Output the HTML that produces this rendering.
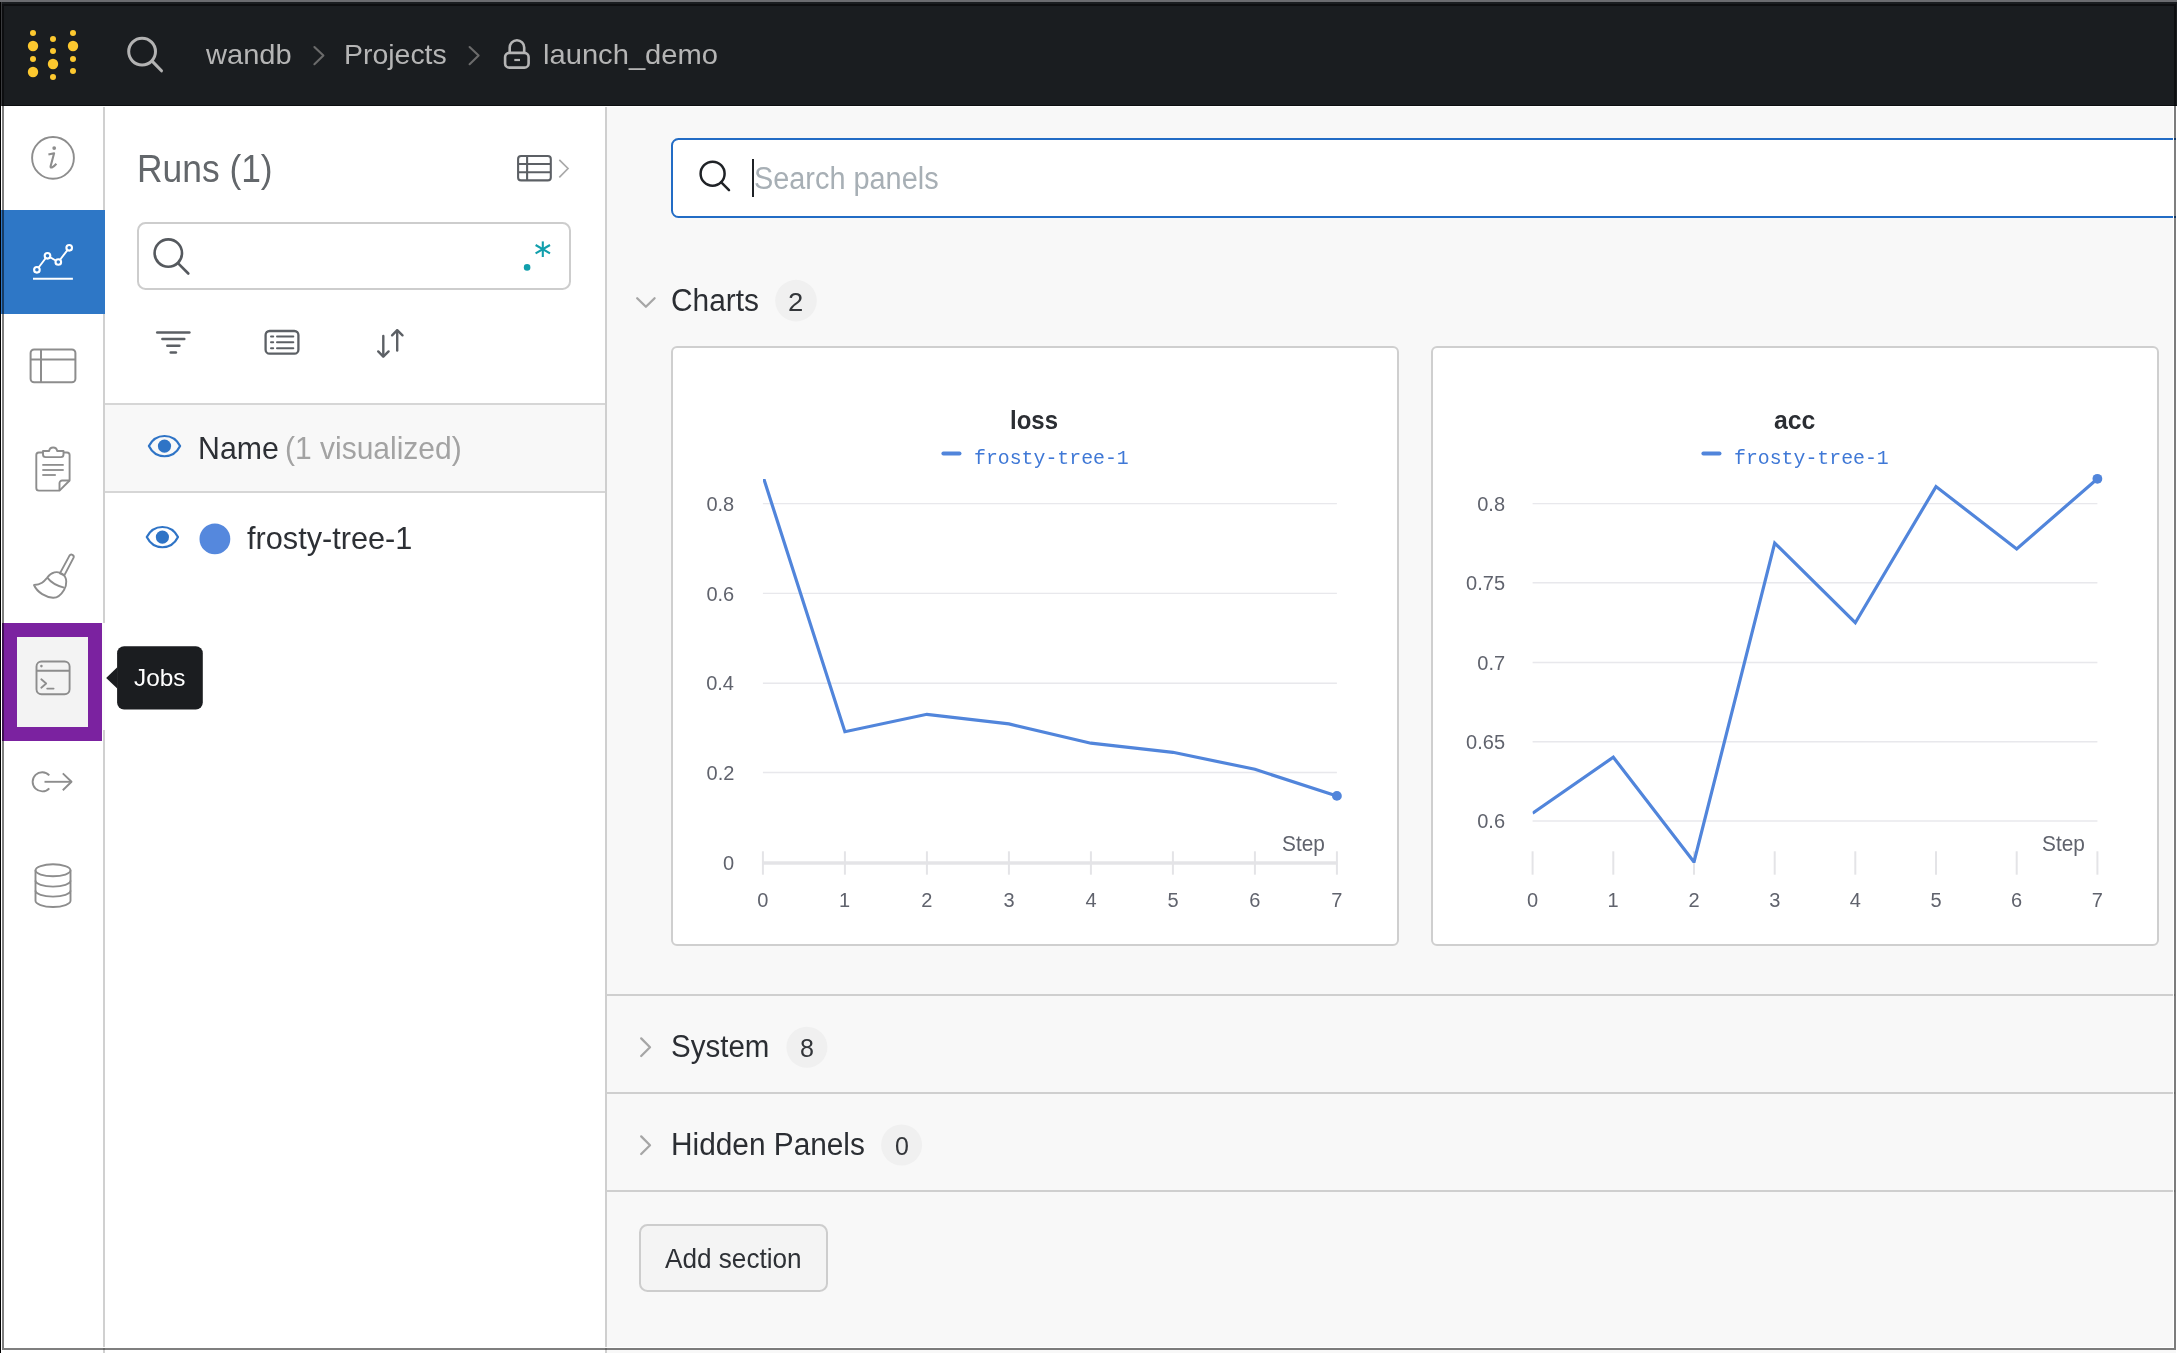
<!DOCTYPE html><html><head><meta charset="utf-8"><style>html,body{margin:0;padding:0;width:2177px;height:1353px;overflow:hidden;position:relative;font-family:"Liberation Sans",sans-serif}#root{position:absolute;left:0;top:0;width:2177px;height:1353px;will-change:transform}</style></head><body><div id="root"><div style="position:absolute;left:0px;top:0px;width:2177px;height:1353px;background:#f8f8f8"></div>
<div style="position:absolute;left:104px;top:106px;width:501px;height:1247px;background:#fff"></div>
<div style="position:absolute;left:1px;top:106px;width:102px;height:1247px;background:#fff"></div>
<div style="position:absolute;left:103px;top:106px;width:2px;height:1247px;background:#d0d0d0"></div>
<div style="position:absolute;left:605px;top:106px;width:1.5px;height:1247px;background:#cfcfcf"></div>
<div style="position:absolute;left:1px;top:2px;width:2176px;height:104px;background:#1a1d20"></div>
<div style="position:absolute;left:1px;top:105px;width:2176px;height:1px;background:#0c0e10"></div>
<div style="position:absolute;left:1px;top:106px;width:2176px;height:1px;background:#ffffff"></div>
<svg style="position:absolute;left:20px;top:20px;" width="70" height="70" viewBox="20 20 70 70"><circle cx="33" cy="33" r="3.0" fill="#fcc82f"/><circle cx="33" cy="46" r="5.2" fill="#fcc82f"/><circle cx="33" cy="59" r="3.0" fill="#fcc82f"/><circle cx="33" cy="72" r="5.2" fill="#fcc82f"/><circle cx="53" cy="39" r="3.0" fill="#fcc82f"/><circle cx="53" cy="51" r="3.0" fill="#fcc82f"/><circle cx="53" cy="64" r="5.2" fill="#fcc82f"/><circle cx="53" cy="77" r="3.0" fill="#fcc82f"/><circle cx="73" cy="33" r="3.0" fill="#fcc82f"/><circle cx="73" cy="46" r="5.2" fill="#fcc82f"/><circle cx="73" cy="59" r="3.0" fill="#fcc82f"/><circle cx="73" cy="71" r="3.0" fill="#fcc82f"/></svg>
<svg style="position:absolute;left:120px;top:30px;" width="50" height="50" viewBox="120 30 50 50"><circle cx="142.1" cy="51.6" r="13.4" fill="none" stroke="#b3b3b3" stroke-width="3"/><line x1="152.6" y1="61.6" x2="161.5" y2="70.8" stroke="#b3b3b3" stroke-width="3" stroke-linecap="round"/></svg>
<div style="position:absolute;left:206.30px;top:26.00px;font-family:'Liberation Sans', sans-serif;font-size:28.5px;line-height:56px;font-weight:400;color:#b5b5b5;white-space:pre;transform:scaleX(1.0199);transform-origin:0 0;">wandb</div>
<svg style="position:absolute;left:305px;top:40px;" width="25" height="30" viewBox="305 40 25 30"><polyline points="314.4,47 323.4,55.6 314.4,64.2" fill="none" stroke="#6b6b6b" stroke-width="2.1" stroke-linecap="round" stroke-linejoin="round"/></svg>
<div style="position:absolute;left:343.93px;top:26.00px;font-family:'Liberation Sans', sans-serif;font-size:28.5px;line-height:56px;font-weight:400;color:#b5b5b5;white-space:pre;transform:scaleX(0.9977);transform-origin:0 0;">Projects</div>
<svg style="position:absolute;left:460px;top:40px;" width="25" height="30" viewBox="460 40 25 30"><polyline points="469.6,47 478.6,55.6 469.6,64.2" fill="none" stroke="#6b6b6b" stroke-width="2.1" stroke-linecap="round" stroke-linejoin="round"/></svg>
<svg style="position:absolute;left:495px;top:30px;" width="45" height="45" viewBox="495 30 45 45"><rect x="505.1" y="52.9" width="23.5" height="14.7" rx="4.2" fill="none" stroke="#b5b5b5" stroke-width="2.6"/><path d="M509.7,52.9 V47.5 A7.2,7.2 0 0 1 524.2,47.5 V52.9" fill="none" stroke="#b5b5b5" stroke-width="2.6"/><line x1="514.3" y1="60" x2="520" y2="60" stroke="#b5b5b5" stroke-width="2.2"/></svg>
<div style="position:absolute;left:543.28px;top:26.00px;font-family:'Liberation Sans', sans-serif;font-size:28.5px;line-height:56px;font-weight:400;color:#b5b5b5;white-space:pre;transform:scaleX(1.0226);transform-origin:0 0;">launch_demo</div>
<svg style="position:absolute;left:25px;top:130px;" width="56" height="56" viewBox="25 130 56 56"><circle cx="53" cy="157.9" r="20.9" fill="none" stroke="#8d8d8d" stroke-width="1.9"/><circle cx="54.2" cy="148.1" r="1.9" fill="#8d8d8d"/><path d="M48.4,154.6 L54.1,153.3 L50.6,166.3 C50.2,168.3 52.6,168.2 56.4,163.8" fill="none" stroke="#8d8d8d" stroke-width="2.1" stroke-linejoin="round"/></svg>
<div style="position:absolute;left:1px;top:210px;width:103.8px;height:104px;background:#2e77c6"></div>
<svg style="position:absolute;left:25px;top:235px;" width="56" height="56" viewBox="25 235 56 56"><polyline points="36.9,269.8 47.5,255.8 58.3,262 69.2,247.8" fill="none" stroke="#fff" stroke-width="1.9"/><circle cx="36.9" cy="269.8" r="2.8" fill="#2e77c6" stroke="#fff" stroke-width="2.1"/><circle cx="47.5" cy="255.8" r="2.8" fill="#2e77c6" stroke="#fff" stroke-width="2.1"/><circle cx="58.3" cy="262" r="2.8" fill="#2e77c6" stroke="#fff" stroke-width="2.1"/><circle cx="69.2" cy="247.8" r="2.8" fill="#2e77c6" stroke="#fff" stroke-width="2.1"/><line x1="33" y1="278.8" x2="72.9" y2="278.8" stroke="#fff" stroke-width="2"/></svg>
<svg style="position:absolute;left:25px;top:340px;" width="56" height="50" viewBox="25 340 56 50"><rect x="30.6" y="349.4" width="44.8" height="32.9" rx="3.5" fill="none" stroke="#8d8d8d" stroke-width="2"/><line x1="30.6" y1="359.6" x2="75.4" y2="359.6" stroke="#8d8d8d" stroke-width="2"/><line x1="41" y1="349.4" x2="41" y2="382.3" stroke="#8d8d8d" stroke-width="2"/></svg>
<svg style="position:absolute;left:30px;top:440px;" width="46" height="56" viewBox="30 440 46 56"><path d="M43,452.5 H38.8 A2.6,2.6 0 0 0 36.3,455.1 V488 A2.6,2.6 0 0 0 38.9,490.6 H59.5 L69.6,480.5 V455.1 A2.6,2.6 0 0 0 67,452.5 H63.5" fill="none" stroke="#8d8d8d" stroke-width="1.9" stroke-linejoin="round"/><path d="M43,451 V454.5 A2.6,2.6 0 0 0 45.6,457.1 H60.9 A2.6,2.6 0 0 0 63.5,454.5 V451 H57.2 A4.1,4.1 0 0 0 49.1,451 Z" fill="none" stroke="#8d8d8d" stroke-width="1.9" stroke-linejoin="round"/><path d="M59.5,490.6 V483.2 A2.6,2.6 0 0 1 62.1,480.5 H69.6" fill="none" stroke="#8d8d8d" stroke-width="1.9"/><line x1="42.3" y1="464.9" x2="63.7" y2="464.9" stroke="#8d8d8d" stroke-width="1.8"/><line x1="42.3" y1="470" x2="63.7" y2="470" stroke="#8d8d8d" stroke-width="1.8"/><line x1="42.3" y1="475" x2="55.8" y2="475" stroke="#8d8d8d" stroke-width="1.8"/></svg>
<svg style="position:absolute;left:25px;top:545px;" width="60" height="60" viewBox="25 545 60 60"><path d="M69.5,555.6 A2.3,2.3 0 0 1 73.6,557.6 L64.3,575.4 L59.9,573.4 Z" fill="none" stroke="#8d8d8d" stroke-width="1.9" stroke-linejoin="round"/><path d="M34,585 C41,585 44,581.5 47.3,577.6 C51,572 57.5,570.5 62.5,574 C67.5,577.5 67,585 64,590 C61,595 57,598 53,597.8 C46,597 37.5,593 34,585 Z" fill="none" stroke="#8d8d8d" stroke-width="1.9" stroke-linejoin="round"/><path d="M47.3,577.6 C51,582.5 57,585.8 64,587.6" fill="none" stroke="#8d8d8d" stroke-width="1.9"/></svg>
<div style="position:absolute;left:2px;top:622.5px;width:100.3px;height:118.7px;background:#7b22a0"></div>
<div style="position:absolute;left:17.2px;top:637.1px;width:70.6px;height:89.6px;background:#f3f3f3"></div>
<div style="position:absolute;left:102.3px;top:622.5px;width:3px;height:107.6px;background:#fbfbfb"></div>
<svg style="position:absolute;left:30px;top:655px;" width="46" height="46" viewBox="30 655 46 46"><rect x="36.5" y="661.5" width="33.1" height="32.8" rx="5" fill="none" stroke="#8d8d8d" stroke-width="1.9"/><line x1="36.5" y1="670.8" x2="69.6" y2="670.8" stroke="#8d8d8d" stroke-width="1.9"/><circle cx="41.4" cy="666.1" r="1.3" fill="#8d8d8d"/><polyline points="41.3,679.3 46.2,683.5 41.3,687.7" fill="none" stroke="#8d8d8d" stroke-width="1.8" stroke-linecap="round" stroke-linejoin="round"/><line x1="47.2" y1="688.6" x2="53.6" y2="688.6" stroke="#8d8d8d" stroke-width="1.8" stroke-linecap="round"/></svg>
<svg style="position:absolute;left:104px;top:640px;" width="102" height="75" viewBox="104 640 102 75"><rect x="117.1" y="646.3" width="85.7" height="63.2" rx="7" fill="#1b1d20"/><polygon points="106.2,677.9 117.5,667 117.5,688.8" fill="#1b1d20"/></svg>
<div style="position:absolute;left:133.93px;top:654.00px;font-family:'Liberation Sans', sans-serif;font-size:24.5px;line-height:48px;font-weight:400;color:#ffffff;white-space:pre;transform:scaleX(0.9941);transform-origin:0 0;">Jobs</div>
<svg style="position:absolute;left:25px;top:760px;" width="56" height="45" viewBox="25 760 56 45"><path d="M49.3,775.3 A9.6,9.6 0 1 0 49.3,788.3" fill="none" stroke="#8d8d8d" stroke-width="1.9"/><line x1="44.5" y1="781.8" x2="71.5" y2="781.8" stroke="#8d8d8d" stroke-width="1.9"/><polyline points="62.8,773.4 71.5,781.8 62.8,790.2" fill="none" stroke="#8d8d8d" stroke-width="1.9" stroke-linejoin="round"/></svg>
<svg style="position:absolute;left:25px;top:855px;" width="56" height="60" viewBox="25 855 56 60"><ellipse cx="53" cy="870.3" rx="17.5" ry="6" fill="none" stroke="#8d8d8d" stroke-width="1.9"/><path d="M35.5,870.3 V900.8 C35.5,904 43,907 53,907 C63,907 70.5,904 70.5,900.8 V870.3" fill="none" stroke="#8d8d8d" stroke-width="1.9"/><path d="M35.5,880.6 C35.5,884 43,886.6 53,886.6 C63,886.6 70.5,884 70.5,880.6" fill="none" stroke="#8d8d8d" stroke-width="1.9"/><path d="M35.5,890.6 C35.5,894 43,896.6 53,896.6 C63,896.6 70.5,894 70.5,890.6" fill="none" stroke="#8d8d8d" stroke-width="1.9"/></svg>
<div style="position:absolute;left:137.37px;top:130.00px;font-family:'Liberation Sans', sans-serif;font-size:39px;line-height:78px;font-weight:400;color:#63676b;white-space:pre;transform:scaleX(0.9069);transform-origin:0 0;">Runs (1)</div>
<svg style="position:absolute;left:510px;top:148px;" width="65" height="40" viewBox="510 148 65 40"><rect x="518.1" y="156" width="32.7" height="24.4" rx="3" fill="none" stroke="#5c6065" stroke-width="2.1"/><line x1="518.1" y1="164" x2="550.8" y2="164" stroke="#5c6065" stroke-width="2.1"/><line x1="518.1" y1="172.3" x2="550.8" y2="172.3" stroke="#5c6065" stroke-width="2.1"/><line x1="527.1" y1="156" x2="527.1" y2="180.4" stroke="#5c6065" stroke-width="2.1"/><polyline points="559.3,159.8 568,168.5 559.3,177.3" fill="none" stroke="#a9a9a9" stroke-width="1.7" stroke-linejoin="miter"/></svg>
<div style="position:absolute;left:137.2px;top:222px;width:433.4px;height:67.8px;box-sizing:border-box;border:2px solid #cdcdcd;border-radius:8.5px;background:#fff"></div>
<svg style="position:absolute;left:145px;top:230px;" width="50" height="50" viewBox="145 230 50 50"><circle cx="168.3" cy="253.1" r="13.7" fill="none" stroke="#55595e" stroke-width="2.6"/><line x1="178.2" y1="263.3" x2="188.3" y2="273.5" stroke="#55595e" stroke-width="2.6" stroke-linecap="round"/></svg>
<svg style="position:absolute;left:515px;top:235px;" width="45" height="40" viewBox="515 235 45 40"><circle cx="527.1" cy="267.4" r="3.3" fill="#119fac"/><line x1="542.8" y1="241.4" x2="542.8" y2="257" stroke="#119fac" stroke-width="2.1"/><line x1="535.6" y1="245" x2="550" y2="253.4" stroke="#119fac" stroke-width="2.1"/><line x1="535.6" y1="253.4" x2="550" y2="245" stroke="#119fac" stroke-width="2.1"/></svg>
<svg style="position:absolute;left:150px;top:320px;" width="50" height="40" viewBox="150 320 50 40"><line x1="157.2" y1="332.5" x2="189.4" y2="332.5" stroke="#5c6065" stroke-width="2.5" stroke-linecap="round"/><line x1="162.4" y1="339.1" x2="184.3" y2="339.1" stroke="#5c6065" stroke-width="2.5" stroke-linecap="round"/><line x1="167.3" y1="345.8" x2="179.4" y2="345.8" stroke="#5c6065" stroke-width="2.5" stroke-linecap="round"/><line x1="170.7" y1="352.4" x2="175.9" y2="352.4" stroke="#5c6065" stroke-width="2.5" stroke-linecap="round"/></svg>
<svg style="position:absolute;left:255px;top:320px;" width="55" height="45" viewBox="255 320 55 45"><rect x="265.6" y="331" width="32.8" height="22.7" rx="4" fill="none" stroke="#5c6065" stroke-width="2.3"/><line x1="271" y1="336.4" x2="273.2" y2="336.4" stroke="#5c6065" stroke-width="2" stroke-linecap="round"/><line x1="277" y1="336.4" x2="293.3" y2="336.4" stroke="#5c6065" stroke-width="2" stroke-linecap="round"/><line x1="271" y1="342.2" x2="273.2" y2="342.2" stroke="#5c6065" stroke-width="2" stroke-linecap="round"/><line x1="277" y1="342.2" x2="293.3" y2="342.2" stroke="#5c6065" stroke-width="2" stroke-linecap="round"/><line x1="271" y1="348.2" x2="273.2" y2="348.2" stroke="#5c6065" stroke-width="2" stroke-linecap="round"/><line x1="277" y1="348.2" x2="293.3" y2="348.2" stroke="#5c6065" stroke-width="2" stroke-linecap="round"/></svg>
<svg style="position:absolute;left:370px;top:320px;" width="45" height="45" viewBox="370 320 45 45"><line x1="383.3" y1="336" x2="383.3" y2="356" stroke="#5c6065" stroke-width="2.4" stroke-linecap="round"/><polyline points="378.2,351.4 383.3,356.6 388.6,351.4" fill="none" stroke="#5c6065" stroke-width="2.4" stroke-linecap="round" stroke-linejoin="round"/><line x1="397.2" y1="330.6" x2="397.2" y2="350.6" stroke="#5c6065" stroke-width="2.4" stroke-linecap="round"/><polyline points="392.1,335.3 397.2,330.2 402.5,335.3" fill="none" stroke="#5c6065" stroke-width="2.4" stroke-linecap="round" stroke-linejoin="round"/></svg>
<div style="position:absolute;left:104.5px;top:404px;width:500.5px;height:88px;background:#f8f8f8"></div>
<div style="position:absolute;left:104.5px;top:403px;width:500.5px;height:2px;background:#d6d6d6"></div>
<div style="position:absolute;left:104.5px;top:491px;width:500.5px;height:2px;background:#d6d6d6"></div>
<svg style="position:absolute;left:140px;top:425px;" width="50" height="45" viewBox="140 425 50 45"><path d="M148.9,446.1 C155.5,432.6 173.5,432.6 180.1,446.1 C173.5,459.6 155.5,459.6 148.9,446.1 Z" fill="none" stroke="#2f74c6" stroke-width="2.2" stroke-linejoin="round"/><circle cx="164.5" cy="446.1" r="6.6" fill="#2f74c6"/></svg>
<div style="position:absolute;left:197.72px;top:418.00px;font-family:'Liberation Sans', sans-serif;font-size:30.5px;line-height:60px;font-weight:400;color:#2d3035;white-space:pre;transform:scaleX(0.9935);transform-origin:0 0;">Name</div>
<div style="position:absolute;left:284.76px;top:418.00px;font-family:'Liberation Sans', sans-serif;font-size:30.5px;line-height:60px;font-weight:400;color:#a3a3a3;white-space:pre;transform:scaleX(0.9831);transform-origin:0 0;">(1 visualized)</div>
<svg style="position:absolute;left:140px;top:515px;" width="50" height="45" viewBox="140 515 50 45"><path d="M146.8,537.1 C153.4,523.6 171.4,523.6 178.0,537.1 C171.4,550.6 153.4,550.6 146.8,537.1 Z" fill="none" stroke="#2f74c6" stroke-width="2.2" stroke-linejoin="round"/><circle cx="162.4" cy="537.1" r="6.6" fill="#2f74c6"/></svg>
<svg style="position:absolute;left:195px;top:520px;" width="40" height="40" viewBox="195 520 40 40"><circle cx="214.9" cy="538.9" r="15.4" fill="#5588dd"/></svg>
<div style="position:absolute;left:247.22px;top:508.00px;font-family:'Liberation Sans', sans-serif;font-size:30.5px;line-height:60px;font-weight:400;color:#2d3035;white-space:pre;transform:scaleX(1.0060);transform-origin:0 0;">frosty-tree-1</div>
<div style="position:absolute;left:670.9px;top:137.8px;width:1540px;height:80.2px;box-sizing:border-box;border:2.2px solid #226cc5;border-radius:7.5px;background:#fff"></div>
<svg style="position:absolute;left:690px;top:150px;" width="50" height="50" viewBox="690 150 50 50"><circle cx="712.6" cy="173.7" r="12" fill="none" stroke="#1f2226" stroke-width="2.5"/><line x1="721.3" y1="182.4" x2="729" y2="190.1" stroke="#1f2226" stroke-width="2.5" stroke-linecap="round"/></svg>
<div style="position:absolute;left:751.8px;top:159.4px;width:2px;height:37.4px;background:#1f2226"></div>
<div style="position:absolute;left:753.72px;top:148.00px;font-family:'Liberation Sans', sans-serif;font-size:31px;line-height:62px;font-weight:400;color:#a7afb5;white-space:pre;transform:scaleX(0.9314);transform-origin:0 0;">Search panels</div>
<svg style="position:absolute;left:625px;top:285px;" width="40" height="30" viewBox="625 285 40 30"><polyline points="637.2,298.3 645.9,306.8 654.6,298.3" fill="none" stroke="#a6a6a6" stroke-width="2.3" stroke-linecap="round" stroke-linejoin="round"/></svg>
<div style="position:absolute;left:671.15px;top:270.00px;font-family:'Liberation Sans', sans-serif;font-size:31px;line-height:62px;font-weight:400;color:#2b2e33;white-space:pre;transform:scaleX(0.9636);transform-origin:0 0;">Charts</div>
<svg style="position:absolute;left:770px;top:275px;" width="55" height="55" viewBox="770 275 55 55"><circle cx="796" cy="300.6" r="20.8" fill="#f0f0f0"/></svg>
<div style="position:absolute;left:788.23px;top:277.00px;font-family:'Liberation Sans', sans-serif;font-size:25px;line-height:50px;font-weight:400;color:#33363a;white-space:pre;transform:scaleX(1.0989);transform-origin:0 0;">2</div>
<div style="position:absolute;left:670.9px;top:346.1px;width:728px;height:599.8px;box-sizing:border-box;border:2px solid #cfcfcf;border-radius:6px;background:#fff"></div>
<div style="position:absolute;left:1431.0px;top:346.1px;width:728px;height:599.8px;box-sizing:border-box;border:2px solid #cfcfcf;border-radius:6px;background:#fff"></div>
<div style="position:absolute;left:1010.47px;top:395.00px;font-family:'Liberation Sans', sans-serif;font-size:25px;line-height:50px;font-weight:700;color:#2b2e33;white-space:pre;transform:scaleX(0.9587);transform-origin:0 0;">loss</div>
<svg style="position:absolute;left:930px;top:445px;" width="40" height="18" viewBox="930 445 40 18"><line x1="943.4" y1="453.6" x2="959.5" y2="453.6" stroke="#5185db" stroke-width="4" stroke-linecap="round"/></svg>
<div style="position:absolute;left:973.94px;top:439.00px;font-family:'Liberation Mono', monospace;font-size:20px;line-height:40px;font-weight:400;color:#3f78d6;white-space:pre;transform:scaleX(0.9920);transform-origin:0 0;">frosty-tree-1</div>
<div style="position:absolute;left:706.42px;top:484.00px;font-family:'Liberation Sans', sans-serif;font-size:20px;line-height:40px;font-weight:400;color:#60636d;white-space:pre;">0.8</div>
<div style="position:absolute;left:706.42px;top:574.00px;font-family:'Liberation Sans', sans-serif;font-size:20px;line-height:40px;font-weight:400;color:#60636d;white-space:pre;">0.6</div>
<div style="position:absolute;left:706.17px;top:663.00px;font-family:'Liberation Sans', sans-serif;font-size:20px;line-height:40px;font-weight:400;color:#60636d;white-space:pre;">0.4</div>
<div style="position:absolute;left:706.55px;top:753.00px;font-family:'Liberation Sans', sans-serif;font-size:20px;line-height:40px;font-weight:400;color:#60636d;white-space:pre;">0.2</div>
<div style="position:absolute;left:722.92px;top:843.00px;font-family:'Liberation Sans', sans-serif;font-size:20px;line-height:40px;font-weight:400;color:#60636d;white-space:pre;">0</div>
<div style="position:absolute;left:757.34px;top:880.00px;font-family:'Liberation Sans', sans-serif;font-size:20px;line-height:40px;font-weight:400;color:#60636d;white-space:pre;">0</div>
<div style="position:absolute;left:839.09px;top:880.00px;font-family:'Liberation Sans', sans-serif;font-size:20px;line-height:40px;font-weight:400;color:#60636d;white-space:pre;">1</div>
<div style="position:absolute;left:921.34px;top:880.00px;font-family:'Liberation Sans', sans-serif;font-size:20px;line-height:40px;font-weight:400;color:#60636d;white-space:pre;">2</div>
<div style="position:absolute;left:1003.40px;top:880.00px;font-family:'Liberation Sans', sans-serif;font-size:20px;line-height:40px;font-weight:400;color:#60636d;white-space:pre;">3</div>
<div style="position:absolute;left:1085.40px;top:880.00px;font-family:'Liberation Sans', sans-serif;font-size:20px;line-height:40px;font-weight:400;color:#60636d;white-space:pre;">4</div>
<div style="position:absolute;left:1167.40px;top:880.00px;font-family:'Liberation Sans', sans-serif;font-size:20px;line-height:40px;font-weight:400;color:#60636d;white-space:pre;">5</div>
<div style="position:absolute;left:1249.28px;top:880.00px;font-family:'Liberation Sans', sans-serif;font-size:20px;line-height:40px;font-weight:400;color:#60636d;white-space:pre;">6</div>
<div style="position:absolute;left:1331.34px;top:880.00px;font-family:'Liberation Sans', sans-serif;font-size:20px;line-height:40px;font-weight:400;color:#60636d;white-space:pre;">7</div>
<div style="position:absolute;left:1282.25px;top:822.00px;font-family:'Liberation Sans', sans-serif;font-size:22px;line-height:44px;font-weight:400;color:#60636d;white-space:pre;transform:scaleX(0.9476);transform-origin:0 0;">Step</div>
<svg style="position:absolute;left:680px;top:470px;" width="720" height="420" viewBox="680 470 720 420"><line x1="762.9" y1="503.6" x2="1336.9" y2="503.6" stroke="#e8e8ec" stroke-width="1.4"/><line x1="762.9" y1="593.4" x2="1336.9" y2="593.4" stroke="#e8e8ec" stroke-width="1.4"/><line x1="762.9" y1="683.2" x2="1336.9" y2="683.2" stroke="#e8e8ec" stroke-width="1.4"/><line x1="762.9" y1="772.5" x2="1336.9" y2="772.5" stroke="#e8e8ec" stroke-width="1.4"/><line x1="762.9" y1="863" x2="1336.9" y2="863" stroke="#e4e4e7" stroke-width="3.6"/><line x1="762.9" y1="851.3" x2="762.9" y2="874.7" stroke="#e4e4e7" stroke-width="2"/><line x1="844.9" y1="851.3" x2="844.9" y2="874.7" stroke="#e4e4e7" stroke-width="2"/><line x1="926.9" y1="851.3" x2="926.9" y2="874.7" stroke="#e4e4e7" stroke-width="2"/><line x1="1008.9" y1="851.3" x2="1008.9" y2="874.7" stroke="#e4e4e7" stroke-width="2"/><line x1="1090.9" y1="851.3" x2="1090.9" y2="874.7" stroke="#e4e4e7" stroke-width="2"/><line x1="1172.9" y1="851.3" x2="1172.9" y2="874.7" stroke="#e4e4e7" stroke-width="2"/><line x1="1254.9" y1="851.3" x2="1254.9" y2="874.7" stroke="#e4e4e7" stroke-width="2"/><line x1="1336.9" y1="851.3" x2="1336.9" y2="874.7" stroke="#e4e4e7" stroke-width="2"/><defs><clipPath id="c0"><rect x="762.9" y="479" width="594.0000000000001" height="383.9"/></clipPath></defs><polyline clip-path="url(#c0)" points="762.9,476.0 844.9,731.7 926.9,714.3 1008.9,723.9 1090.9,743.2 1172.9,752.3 1254.9,769.3 1336.9,795.9" fill="none" stroke="#5185db" stroke-width="3.2" stroke-linejoin="miter" stroke-linecap="butt"/><circle cx="1336.9" cy="795.9" r="4.9" fill="#5185db"/></svg>
<div style="position:absolute;left:1774.16px;top:395.00px;font-family:'Liberation Sans', sans-serif;font-size:25px;line-height:50px;font-weight:700;color:#2b2e33;white-space:pre;transform:scaleX(0.9919);transform-origin:0 0;">acc</div>
<svg style="position:absolute;left:1690px;top:445px;" width="40" height="18" viewBox="1690 445 40 18"><line x1="1703.4" y1="453.6" x2="1719.5" y2="453.6" stroke="#5185db" stroke-width="4" stroke-linecap="round"/></svg>
<div style="position:absolute;left:1733.94px;top:439.00px;font-family:'Liberation Mono', monospace;font-size:20px;line-height:40px;font-weight:400;color:#3f78d6;white-space:pre;transform:scaleX(0.9920);transform-origin:0 0;">frosty-tree-1</div>
<div style="position:absolute;left:1477.22px;top:484.00px;font-family:'Liberation Sans', sans-serif;font-size:20px;line-height:40px;font-weight:400;color:#60636d;white-space:pre;">0.8</div>
<div style="position:absolute;left:1466.10px;top:563.00px;font-family:'Liberation Sans', sans-serif;font-size:20px;line-height:40px;font-weight:400;color:#60636d;white-space:pre;">0.75</div>
<div style="position:absolute;left:1477.35px;top:643.00px;font-family:'Liberation Sans', sans-serif;font-size:20px;line-height:40px;font-weight:400;color:#60636d;white-space:pre;">0.7</div>
<div style="position:absolute;left:1466.10px;top:722.00px;font-family:'Liberation Sans', sans-serif;font-size:20px;line-height:40px;font-weight:400;color:#60636d;white-space:pre;">0.65</div>
<div style="position:absolute;left:1477.22px;top:801.00px;font-family:'Liberation Sans', sans-serif;font-size:20px;line-height:40px;font-weight:400;color:#60636d;white-space:pre;">0.6</div>
<div style="position:absolute;left:1527.04px;top:880.00px;font-family:'Liberation Sans', sans-serif;font-size:20px;line-height:40px;font-weight:400;color:#60636d;white-space:pre;">0</div>
<div style="position:absolute;left:1607.47px;top:880.00px;font-family:'Liberation Sans', sans-serif;font-size:20px;line-height:40px;font-weight:400;color:#60636d;white-space:pre;">1</div>
<div style="position:absolute;left:1688.41px;top:880.00px;font-family:'Liberation Sans', sans-serif;font-size:20px;line-height:40px;font-weight:400;color:#60636d;white-space:pre;">2</div>
<div style="position:absolute;left:1769.16px;top:880.00px;font-family:'Liberation Sans', sans-serif;font-size:20px;line-height:40px;font-weight:400;color:#60636d;white-space:pre;">3</div>
<div style="position:absolute;left:1849.84px;top:880.00px;font-family:'Liberation Sans', sans-serif;font-size:20px;line-height:40px;font-weight:400;color:#60636d;white-space:pre;">4</div>
<div style="position:absolute;left:1930.53px;top:880.00px;font-family:'Liberation Sans', sans-serif;font-size:20px;line-height:40px;font-weight:400;color:#60636d;white-space:pre;">5</div>
<div style="position:absolute;left:2011.09px;top:880.00px;font-family:'Liberation Sans', sans-serif;font-size:20px;line-height:40px;font-weight:400;color:#60636d;white-space:pre;">6</div>
<div style="position:absolute;left:2091.84px;top:880.00px;font-family:'Liberation Sans', sans-serif;font-size:20px;line-height:40px;font-weight:400;color:#60636d;white-space:pre;">7</div>
<div style="position:absolute;left:2042.25px;top:822.00px;font-family:'Liberation Sans', sans-serif;font-size:22px;line-height:44px;font-weight:400;color:#60636d;white-space:pre;transform:scaleX(0.9476);transform-origin:0 0;">Step</div>
<svg style="position:absolute;left:1440px;top:470px;" width="720" height="420" viewBox="1440 470 720 420"><line x1="1532.6" y1="503.6" x2="2097.4" y2="503.6" stroke="#e8e8ec" stroke-width="1.4"/><line x1="1532.6" y1="582.8" x2="2097.4" y2="582.8" stroke="#e8e8ec" stroke-width="1.4"/><line x1="1532.6" y1="662.5" x2="2097.4" y2="662.5" stroke="#e8e8ec" stroke-width="1.4"/><line x1="1532.6" y1="741.8" x2="2097.4" y2="741.8" stroke="#e8e8ec" stroke-width="1.4"/><line x1="1532.6" y1="821" x2="2097.4" y2="821" stroke="#e8e8ec" stroke-width="1.4"/><line x1="1532.6" y1="851.3" x2="1532.6" y2="874.7" stroke="#e4e4e7" stroke-width="2"/><line x1="1613.3" y1="851.3" x2="1613.3" y2="874.7" stroke="#e4e4e7" stroke-width="2"/><line x1="1694.0" y1="851.3" x2="1694.0" y2="874.7" stroke="#e4e4e7" stroke-width="2"/><line x1="1774.7" y1="851.3" x2="1774.7" y2="874.7" stroke="#e4e4e7" stroke-width="2"/><line x1="1855.3" y1="851.3" x2="1855.3" y2="874.7" stroke="#e4e4e7" stroke-width="2"/><line x1="1936.0" y1="851.3" x2="1936.0" y2="874.7" stroke="#e4e4e7" stroke-width="2"/><line x1="2016.7" y1="851.3" x2="2016.7" y2="874.7" stroke="#e4e4e7" stroke-width="2"/><line x1="2097.4" y1="851.3" x2="2097.4" y2="874.7" stroke="#e4e4e7" stroke-width="2"/><defs><clipPath id="c760"><rect x="1532.6" y="479" width="584.8000000000002" height="383.9"/></clipPath></defs><polyline clip-path="url(#c760)" points="1532.6,813.3 1613.3,757.2 1694.0,862.0 1774.7,543.0 1855.3,622.7 1936.0,486.6 2016.7,548.9 2097.4,478.8" fill="none" stroke="#5185db" stroke-width="3.2" stroke-linejoin="miter" stroke-linecap="butt"/><circle cx="2097.4" cy="478.8" r="4.9" fill="#5185db"/></svg>
<div style="position:absolute;left:606.5px;top:994px;width:1568px;height:2px;background:#cfcfcf"></div>
<div style="position:absolute;left:606.5px;top:1092px;width:1568px;height:2px;background:#cfcfcf"></div>
<div style="position:absolute;left:606.5px;top:1190px;width:1568px;height:2px;background:#cfcfcf"></div>
<svg style="position:absolute;left:630px;top:1030px;" width="30" height="35" viewBox="630 1030 30 35"><polyline points="641.2,1038.4 650.0,1047.2 641.2,1056.0" fill="none" stroke="#a6a6a6" stroke-width="2.3" stroke-linecap="round" stroke-linejoin="round"/></svg>
<div style="position:absolute;left:671.49px;top:1016.00px;font-family:'Liberation Sans', sans-serif;font-size:31px;line-height:62px;font-weight:400;color:#2b2e33;white-space:pre;transform:scaleX(0.9522);transform-origin:0 0;">System</div>
<svg style="position:absolute;left:780px;top:1020px;" width="55" height="55" viewBox="780 1020 55 55"><circle cx="806.9" cy="1047.2" r="20.5" fill="#f0f0f0"/></svg>
<div style="position:absolute;left:799.59px;top:1022.00px;font-family:'Liberation Sans', sans-serif;font-size:25.5px;line-height:52px;font-weight:400;color:#33363a;white-space:pre;transform:scaleX(0.9833);transform-origin:0 0;">8</div>
<svg style="position:absolute;left:630px;top:1128px;" width="30" height="35" viewBox="630 1128 30 35"><polyline points="641.2,1136.4 650.0,1145.2 641.2,1154.0" fill="none" stroke="#a6a6a6" stroke-width="2.3" stroke-linecap="round" stroke-linejoin="round"/></svg>
<div style="position:absolute;left:671.20px;top:1114.00px;font-family:'Liberation Sans', sans-serif;font-size:31px;line-height:62px;font-weight:400;color:#2b2e33;white-space:pre;transform:scaleX(0.9616);transform-origin:0 0;">Hidden Panels</div>
<svg style="position:absolute;left:875px;top:1118px;" width="55" height="55" viewBox="875 1118 55 55"><circle cx="901.6" cy="1145" r="20.5" fill="#f0f0f0"/></svg>
<div style="position:absolute;left:894.62px;top:1120.00px;font-family:'Liberation Sans', sans-serif;font-size:25.5px;line-height:52px;font-weight:400;color:#33363a;white-space:pre;transform:scaleX(0.9796);transform-origin:0 0;">0</div>
<div style="position:absolute;left:639.2px;top:1224.2px;width:188.5px;height:67.5px;box-sizing:border-box;border:2px solid #cdcdcd;border-radius:8.5px;background:#f4f4f4"></div>
<div style="position:absolute;left:665.28px;top:1231.00px;font-family:'Liberation Sans', sans-serif;font-size:28px;line-height:56px;font-weight:400;color:#2e3136;white-space:pre;transform:scaleX(0.9337);transform-origin:0 0;">Add section</div>
<div style="position:absolute;left:0px;top:0px;width:2177px;height:2px;background:#6b6c70"></div>
<div style="position:absolute;left:0px;top:2px;width:1px;height:1351px;background:#000"></div>
<div style="position:absolute;left:1px;top:2px;width:1px;height:104px;background:#3a3b3e"></div>
<div style="position:absolute;left:2px;top:4px;width:2px;height:1346px;background:rgba(0,0,0,0.5)"></div>
<div style="position:absolute;left:4px;top:4px;width:2172px;height:2px;background:rgba(0,0,0,0.5)"></div>
<div style="position:absolute;left:2174px;top:6px;width:2px;height:1344px;background:rgba(0,0,0,0.5)"></div>
<div style="position:absolute;left:4px;top:1348px;width:2170px;height:2px;background:rgba(0,0,0,0.5)"></div>
<div style="position:absolute;left:2173px;top:107px;width:1px;height:1241px;background:#fff"></div>
<div style="position:absolute;left:4px;top:1347px;width:2169px;height:1px;background:#fff"></div>
<div style="position:absolute;left:2176px;top:106px;width:1px;height:1247px;background:#fff"></div></div></body></html>
